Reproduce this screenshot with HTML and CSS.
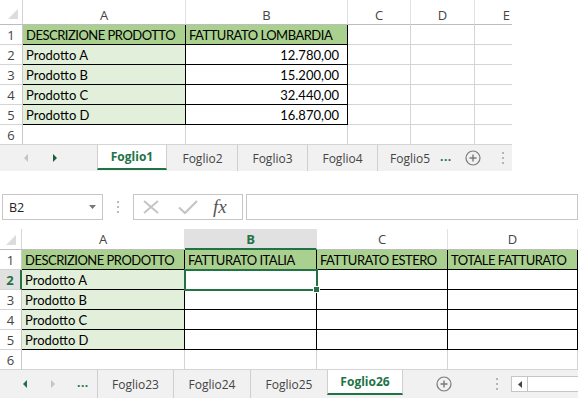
FILE: index.html
```html
<!DOCTYPE html>
<html lang="it">
<head>
  <meta charset="UTF-8" />
  <meta name="viewport" content="width=device-width, initial-scale=1.0"/>
  <title>Fatturato</title>
  <link rel="stylesheet" href="styles.css">
</head>
<body>
  <!-- primo foglio -->
  <div class="sheet sheet-top">
    <div class="grid grid-top">
      <div class="c corner"><svg width="19" height="20"><polygon points="8,19 18,19 18,9" fill="#dcdcdc"/></svg></div>
      <div class="c ch">A</div>
      <div class="c ch">B</div>
      <div class="c ch">C</div>
      <div class="c ch">D</div>
      <div class="c ch last end">E</div>

      <div class="c rh">1</div>
      <div class="c hd bk">DESCRIZIONE PRODOTTO</div>
      <div class="c hd bk">FATTURATO LOMBARDIA</div>
      <div class="c"></div>
      <div class="c"></div>
      <div class="c last"></div>

      <div class="c rh">2</div>
      <div class="c lt bk">Prodotto A</div>
      <div class="c bk num">12.780,00</div>
      <div class="c"></div>
      <div class="c"></div>
      <div class="c last"></div>

      <div class="c rh">3</div>
      <div class="c lt bk">Prodotto B</div>
      <div class="c bk num">15.200,00</div>
      <div class="c"></div>
      <div class="c"></div>
      <div class="c last"></div>

      <div class="c rh">4</div>
      <div class="c lt bk">Prodotto C</div>
      <div class="c bk num">32.440,00</div>
      <div class="c"></div>
      <div class="c"></div>
      <div class="c last"></div>

      <div class="c rh">5</div>
      <div class="c lt bk">Prodotto D</div>
      <div class="c bk num">16.870,00</div>
      <div class="c"></div>
      <div class="c"></div>
      <div class="c last"></div>

      <div class="c rh">6</div>
      <div class="c"></div>
      <div class="c"></div>
      <div class="c"></div>
      <div class="c"></div>
      <div class="c last"></div>
    </div>

    <div class="tabbar tabbar-top">
      <div class="tab-nav">
        <svg width="97" height="26">
          <polygon points="28,9 24,13 28,17" fill="#c4c4c4"/>
          <polygon points="53,9 57,13 53,17" fill="#1d5e3a"/>
        </svg>
      </div>
      <div class="tab active">Foglio1</div>
      <div class="tab">Foglio2</div>
      <div class="tab">Foglio3</div>
      <div class="tab">Foglio4</div>
      <div class="tab cut">Foglio5</div>
      <div class="more">...</div>
      <div class="add">
        <svg width="16" height="16"><circle cx="8" cy="8" r="7" fill="none" stroke="#7a7a7a" stroke-width="1.2"/><path d="M8 4.5V11.5M4.5 8H11.5" stroke="#7a7a7a" stroke-width="1.4"/></svg>
      </div>
      <div class="vdots">
        <svg width="4" height="14"><rect x="1" y="1" width="2" height="2" fill="#b5b5b5"/><rect x="1" y="6" width="2" height="2" fill="#b5b5b5"/><rect x="1" y="11" width="2" height="2" fill="#b5b5b5"/></svg>
      </div>
    </div>
  </div>

  <!-- barra della formula -->
  <div class="fbar">
    <div class="namebox">
      <span>B2</span>
      <svg width="7" height="4"><polygon points="0,0 7,0 3.5,4" fill="#777"/></svg>
    </div>
    <div class="fdots">
      <svg width="4" height="14"><rect x="1" y="1" width="2" height="2" fill="#bbb"/><rect x="1" y="6" width="2" height="2" fill="#bbb"/><rect x="1" y="11" width="2" height="2" fill="#bbb"/></svg>
    </div>
    <div class="fbtns">
      <svg class="fx-cancel" width="16" height="14"><path d="M1 1L15 13M15 1L1 13" stroke="#c4c4c4" stroke-width="2"/></svg>
      <svg class="fx-ok" width="20" height="14"><path d="M1 7.5L7 13L19 1" stroke="#c4c4c4" stroke-width="2.2" fill="none"/></svg>
      <span class="fx">fx</span>
    </div>
    <div class="finput"></div>
  </div>

  <!-- secondo foglio -->
  <div class="sheet sheet-bottom">
    <div class="grid grid-bottom">
      <div class="c corner"><svg width="18" height="18"><polygon points="6,16 16,16 16,6" fill="#dcdcdc"/></svg></div>
      <div class="c ch">A</div>
      <div class="c ch on">B</div>
      <div class="c ch">C</div>
      <div class="c ch">D</div>

      <div class="c rh">1</div>
      <div class="c hd bk">DESCRIZIONE PRODOTTO</div>
      <div class="c hd bk">FATTURATO ITALIA</div>
      <div class="c hd bk">FATTURATO ESTERO</div>
      <div class="c hd bk">TOTALE FATTURATO</div>

      <div class="c rh on">2</div>
      <div class="c lt bk">Prodotto A</div>
      <div class="c bk sel"></div>
      <div class="c bk"></div>
      <div class="c bk"></div>

      <div class="c rh">3</div>
      <div class="c lt bk">Prodotto B</div>
      <div class="c bk"></div>
      <div class="c bk"></div>
      <div class="c bk"></div>

      <div class="c rh">4</div>
      <div class="c lt bk">Prodotto C</div>
      <div class="c bk"></div>
      <div class="c bk"></div>
      <div class="c bk"></div>

      <div class="c rh">5</div>
      <div class="c lt bk">Prodotto D</div>
      <div class="c bk"></div>
      <div class="c bk"></div>
      <div class="c bk"></div>

      <div class="c rh">6</div>
      <div class="c"></div>
      <div class="c"></div>
      <div class="c"></div>
      <div class="c"></div>
    </div>

    <div class="tabbar tabbar-bottom">
      <div class="tab-nav">
        <svg width="74" height="28">
          <polygon points="27,10 23,14 27,18" fill="#217346"/>
          <polygon points="51,10 55,14 51,18" fill="#c4c4c4"/>
        </svg>
        <span class="more">...</span>
      </div>
      <div class="tab w76">Foglio23</div>
      <div class="tab">Foglio24</div>
      <div class="tab">Foglio25</div>
      <div class="tab active w76">Foglio26</div>
      <div class="add add-b">
        <svg width="16" height="16"><circle cx="8" cy="8" r="7" fill="none" stroke="#7a7a7a" stroke-width="1.2"/><path d="M8 4.5V11.5M4.5 8H11.5" stroke="#7a7a7a" stroke-width="1.4"/></svg>
      </div>
      <div class="vdots vdots-b">
        <svg width="4" height="14"><rect x="1" y="1" width="2" height="2" fill="#b5b5b5"/><rect x="1" y="6" width="2" height="2" fill="#b5b5b5"/><rect x="1" y="11" width="2" height="2" fill="#b5b5b5"/></svg>
      </div>
      <div class="hscroll">
        <div class="hscroll-btn"><svg width="4" height="7"><polygon points="4,0 0,3.5 4,7" fill="#444"/></svg></div>
      </div>
    </div>
  </div>
</body>
</html>
```

FILE: styles.css
```css
body {
  margin: 0;
  background: #fff;
  font-family: Lato, "Liberation Sans", sans-serif;
  color: #000;
}

.sheet-top {
  width: 512px;
}
.sheet-bottom {
  width: 578px;
}

.grid {
  display: grid;
  grid-auto-rows: 20px;
}
.grid-top {
  grid-template-columns: 23px 163px 162px 63px 64px 37px;
  grid-template-rows: 25px;
}
.grid-bottom {
  grid-template-columns: 22px 163px 132px 131px 130px;
  grid-template-rows: 21px;
}

/* celle */
.c {
  box-sizing: border-box;
  border-right: 1px solid #d4d4d4;
  border-bottom: 1px solid #d4d4d4;
  display: flex;
  align-items: center;
  padding: 0 3px;
  font-size: 13px;
  white-space: nowrap;
  overflow: hidden;
}
.c.last {
  border-right: none;
}
.corner {
  padding: 0;
  align-items: flex-start;
  border-bottom-color: #bdbdbd;
}
.ch {
  justify-content: center;
  font-family: "Open Sans", sans-serif;
  font-size: 13px;
  color: #444;
  border-right-color: #e1e1e1;
  border-bottom-color: #bdbdbd;
}
.grid-top .ch {
  padding-top: 5px;
}
.ch.end {
  justify-content: flex-end;
  padding-right: 2px;
}
.ch.on {
  background: #e1e1e1;
  color: #217346;
  font-weight: bold;
  border-bottom: 2px solid #217346;
  padding-top: 1px;
}
.rh {
  justify-content: center;
  padding: 0;
  font-family: "Open Sans", sans-serif;
  color: #444;
  border-right-color: #c8c8c8;
}
.rh.on {
  background: #e1e1e1;
  color: #217346;
  font-weight: bold;
  border-right: 2px solid #217346;
}

.hd {
  background: #a9d08e;
  letter-spacing: -0.5px;
}
.lt {
  background: #e2efda;
}
.bk {
  border-right-color: #000;
  border-bottom-color: #000;
}
.num {
  justify-content: flex-end;
  padding-right: 8px;
}
.sel {
  position: relative;
  overflow: visible;
  outline: 2px solid #217346;
  outline-offset: -1px;
}
.sel::after {
  content: "";
  position: absolute;
  right: -4px;
  bottom: -4px;
  width: 5px;
  height: 5px;
  background: #217346;
  border: 1px solid #fff;
}

/* barra dei fogli */
.tabbar {
  display: flex;
  height: 26px;
  background: #f1f1f1;
  font-family: "Open Sans", sans-serif;
  font-size: 12px;
  color: #444;
}
.tabbar-bottom {
  height: 28px;
}
.tab-nav {
  width: 97px;
  flex-shrink: 0;
  display: flex;
  align-items: center;
}
.tab {
  box-sizing: border-box;
  width: 70px;
  flex-shrink: 0;
  display: flex;
  align-items: center;
  justify-content: center;
  border-left: 1px solid #cfcfcf;
  white-space: nowrap;
  overflow: hidden;
}
.tabbar-bottom .tab {
  width: 77px;
}
.tabbar-bottom .tab.w76 {
  width: 76px;
}
.tab.active {
  background: #fff;
  color: #217346;
  font-weight: bold;
  border-right: 1px solid #cfcfcf;
  border-bottom: 2px solid #217346;
  margin-bottom: 1px;
}
.tabbar-bottom .tab.active {
  margin-bottom: 3px;
}
.tab.active + .tab {
  border-left-color: transparent;
}
.tab.cut {
  width: 53px;
  justify-content: flex-start;
  padding-left: 12px;
}
.more {
  color: #217346;
  font-weight: bold;
  font-size: 12px;
  letter-spacing: 0.5px;
  display: flex;
  align-items: center;
  margin-left: 10px;
  padding-bottom: 3px;
}
.tabbar-bottom .more {
  margin-left: 3px;
}
.add {
  display: flex;
  align-items: center;
  margin-left: 13px;
}
.add-b {
  margin-left: 33px;
}
.vdots {
  display: flex;
  align-items: center;
  margin-left: 20px;
}
.vdots-b {
  margin-left: 43px;
}
.hscroll {
  flex: 1;
  align-self: center;
  height: 16px;
  margin-left: 12px;
  box-sizing: border-box;
  border: 1px solid #c6c6c6;
  border-right: none;
  background: #fff;
  display: flex;
}
.hscroll-btn {
  width: 15px;
  border-right: 1px solid #c6c6c6;
  display: flex;
  align-items: center;
  justify-content: center;
}

/* barra della formula */
.fbar {
  display: flex;
  height: 26px;
  margin: 23px 0 9px;
}
.namebox {
  box-sizing: border-box;
  width: 101px;
  margin-left: 2px;
  border: 1px solid #c6c6c6;
  display: flex;
  align-items: center;
  padding: 0 6px;
  font-family: "Open Sans", sans-serif;
  font-size: 12.5px;
  color: #222;
}
.namebox svg {
  margin-left: auto;
}
.fdots {
  width: 30px;
  display: flex;
  align-items: center;
  justify-content: center;
}
.fbtns {
  box-sizing: border-box;
  width: 110px;
  border: 1px solid #c6c6c6;
  display: flex;
  align-items: center;
  padding-left: 9px;
}
.fx-ok {
  margin-left: 19px;
}
.fx {
  margin-left: 15px;
  font-family: "Liberation Serif", serif;
  font-style: italic;
  font-size: 19px;
  color: #555;
}
.finput {
  box-sizing: border-box;
  width: 332px;
  margin-left: 3px;
  border: 1px solid #c6c6c6;
}
```
